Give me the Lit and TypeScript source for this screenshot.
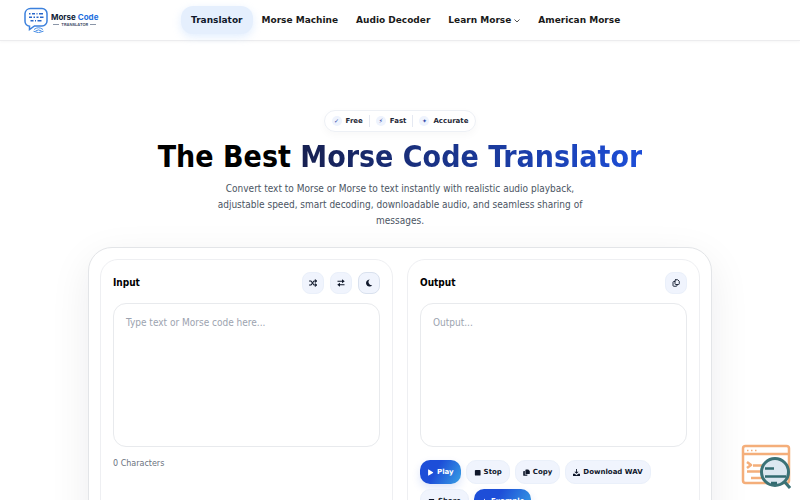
import { LitElement, html, css, svg } from "lit";
import { customElement } from "lit/decorators.js";

const glyph = (body: unknown, size = 8) => html`<svg width=${size} height=${size} viewBox="0 0 16 16" aria-hidden="true">${body}</svg>`;

const stroke = "fill:none;stroke:currentColor;stroke-linejoin:round;stroke-linecap:round";

const icons = {
  shuffle: glyph(svg`<g style=${stroke} stroke-width="2.200"><path d="M1 4h3l6 8h4M1 12h3l1.700-2.200M8.300 6.200 10 4h4"/><path d="M12.500 1.800 14.800 4l-2.300 2.200M12.500 9.800 14.800 12l-2.300 2.200"/></g>`),
  swap: glyph(svg`<path fill="currentColor" d="M1 3.500h9V.5l5.500 4-5.500 4v-3H1zM15 10.500v2H6v3l-5.500-4 5.500-4v3z"/>`),
  moon: glyph(svg`<path fill="currentColor" d="M9.500 1a7 7 0 1 0 5 11.500A6.500 6.500 0 0 1 9.500 1z"/>`),
  copyOutline: glyph(svg`<g style=${stroke} stroke-width="1.800"><path d="M7.500 1.500h4l3 3v5a1.500 1.500 0 0 1-1.500 1.500H7.500A1.500 1.500 0 0 1 6 9.500V3a1.500 1.500 0 0 1 1.500-1.500zM5.500 5H3.500A1.500 1.500 0 0 0 2 6.500v6.500a1.500 1.500 0 0 0 1.500 1.500H8.500a1.500 1.500 0 0 0 1.500-1.500v-1.500"/></g>`),
  play: glyph(svg`<path fill="currentColor" d="M2.500 1.500v13q0 1.200 1.200.6l10-6.200q1-.9 0-1.700l-10-6.300q-1.200-.6-1.200.6z"/>`, 7),
  stop: glyph(svg`<rect x="2" y="2" width="13" height="13" rx="2" fill="currentColor"/>`, 7),
  copy: glyph(svg`<path fill="currentColor" d="M7 1h5l3.500 3.500V10a1.500 1.500 0 0 1-1.500 1.500H7A1.500 1.500 0 0 1 5.500 10V2.500A1.500 1.500 0 0 1 7 1zM2 4.500h2.200V12.800H10V14a1.500 1.500 0 0 1-1.500 1.500H2A1.500 1.500 0 0 1 .5 14V6A1.500 1.500 0 0 1 2 4.500z"/>`, 7),
  download: glyph(svg`<path fill="currentColor" d="M7 0h2v6h4L8 11 3 6h4zM0 11h4l4 3 4-3h4v5H0z"/>`, 7),
  share: glyph(svg`<path fill="currentColor" d="M2 2h12v3H2zM2 7h12v7H2z"/>`, 7),
  example: glyph(svg`<path fill="currentColor" d="M8 1l2 5 5 2-5 2-2 5-2-5-5-2 5-2z"/>`, 7),
  chevron: html`<svg width="6" height="5" viewBox="0 0 12 10" aria-hidden="true"><path d="M1 3l5 5 5-5" fill="none" stroke="currentColor" stroke-width="1.500"/></svg>`,
};

@customElement("morse-logo")
class MorseLogo extends LitElement {
  static styles = css`
    :host { display: block; }
    .logo { display: flex; align-items: center; gap: 2px; color: #0d1b36; text-decoration: none; }
    .mark { display: block; }
    .name { display: block; font: 700 8px/9px Inter, sans-serif; white-space: nowrap; }
    .code { color: #1f6fe0; }
    .tag { display: flex; align-items: center; justify-content: center; gap: 2px; font: 600 4px/5px Inter, sans-serif; color: #33415c; }
    .rule { width: 6px; height: 1px; background: #8b96a8; }
  `;
  render() {
    return html`<a class="logo" href="#" aria-label="Morse Code Translator">
      <svg class="mark" width="25" height="26" viewBox="0 0 25 26" fill="none">
        <path d="M6.500 1.500h11.500a5 5 0 0 1 5 5v7.500a5 5 0 0 1-5 5H10.500L5.500 22.500V19.200A5 5 0 0 1 1 14V6.500A5.500 5.500 0 0 1 6.500 1.500z" stroke="#3b80dd" stroke-width="1.500"/>
        <path d="M5 6.800h1.500M8 6.800h3M12.500 6.800h1M15 6.800h4M5 10.300h3M9.500 10.300h1.500M12.500 10.300h2M16 10.300h3.500M6.500 13.800h3M11 13.800h1M13.500 13.800h4" stroke="#2766c9" stroke-width="1.400"/>
        <path d="M10 22.500q4.500-3.500 9 0M11.500 24q3-2.200 6 0M9.500 24.200q5 3 10 0" stroke="#4c90e6"/>
      </svg>
      <span><span class="name">Morse <span class="code">Code</span></span>
      <span class="tag"><i class="rule"></i>TRANSLATOR<i class="rule"></i></span></span>
    </a>`;
  }
}

@customElement("app-root")
class AppRoot extends LitElement {
  static styles = css`
    :host { display: block; height: 100vh; overflow: hidden; position: relative; background: #fff; color: #111827; font: 10px/16px "DejaVu Sans Condensed", "DejaVu Sans", sans-serif; }
    * { box-sizing: border-box; }
    button { font: 700 7px/10px "DejaVu Sans", sans-serif; color: #0f172a; border: 1px solid #eaf0fa; background: #f0f4fd; cursor: pointer; }
    header { display: flex; align-items: center; height: 41px; padding: 0 24px; border-bottom: 1px solid #ececee; box-shadow: 0 1px 3px #0000000a; }
    .brand { flex: 0 0 157px; }
    nav { display: flex; font-family: "DejaVu Sans", sans-serif; }
    .link { display: flex; align-items: center; gap: 3px; height: 28px; padding: 0 9px; border-radius: 12px; font-size: 9px; font-weight: 700; color: #1a1a1a; text-decoration: none; white-space: nowrap; }
    .current { background: #e5effd; box-shadow: 0 3px 8px #dbeafecc; padding: 0 10px; color: #0f172a; }
    .hero { display: flex; flex-direction: column; align-items: center; padding: 69px 24px 18px; text-align: center; }
    .badges { display: flex; margin: 0; padding: 0 7px; list-style: none; height: 22px; align-items: center; border: 1px solid #edf0f5; border-radius: 11px; box-shadow: 0 3px 8px #0f172a08; font: 700 7px/12px "DejaVu Sans", sans-serif; color: #1f2937; }
    .badge { display: flex; align-items: center; gap: 4px; }
    .badge + .badge { border-left: 1px solid #e5e9f2; margin-left: 6px; padding-left: 6px; }
    .dot { display: grid; place-items: center; width: 10px; height: 10px; border-radius: 5px; background: #eef3fd; color: #3148a8; font-size: 6px; line-height: 10px; }
    h1 { margin: 8px 0 7px; font-size: 30px; line-height: 34px; color: #000; }
    .accent { background: linear-gradient(90deg, #172050, #1d4ed8); background-clip: text; -webkit-background-clip: text; color: transparent; }
    .lead { margin: 0; max-width: 384px; color: #4b5563; }
    main { width: 78%; margin: 0 auto; display: grid; grid-template-columns: 1fr 1fr; gap: 14px; padding: 11px; border: 1px solid #e3e5e8; border-radius: 24px; background: #fff; box-shadow: 0 12px 40px #0f172a14; }
    .panel { padding: 12px; height: 320px; border: 1px solid #eeeff2; border-radius: 18px; background: #fff; }
    .top { display: flex; align-items: center; gap: 6px; height: 22px; margin-bottom: 9px; }
    h2 { flex: 1; margin: 0; color: #000; font-size: 10px; line-height: 16px; }
    .tool { width: 22px; height: 22px; padding: 0; border-radius: 8px; display: grid; place-items: center; }
    .outlined { border-color: #d9e1ee; }
    textarea { display: block; width: 100%; height: 144px; padding: 11px 12px; border: 1px solid #e8eaed; border-radius: 13px; resize: none; background: #fff; color: #111827; font: inherit; outline: none; }
    textarea::placeholder { color: #9ca3af; opacity: 1; }
    .count { margin: 10px 0 0; color: #6b7280; font: 8px/14px "DejaVu Sans", sans-serif; }
    .actions { display: flex; flex-wrap: wrap; gap: 5px; margin-top: 13px; }
    .action { display: flex; align-items: center; gap: 3px; height: 24px; padding: 0 7px; border-radius: 10px; }
    .primary { padding: 0 6px; border-color: transparent; color: #fff; background: linear-gradient(120deg, #1d4ed8 40%, #38a0e4) border-box; box-shadow: 0 4px 8px #1d4ed826; }
    .inspect { position: absolute; right: 9px; bottom: 11px; width: 50px; height: 46px; padding: 0; border: 0; background: none; }
  `;

  render() {
    return html`
      <header>
        <morse-logo class="brand"></morse-logo>
        <nav>
          <a class="link current" href="#">Translator</a>
          <a class="link" href="#">Morse Machine</a>
          <a class="link" href="#">Audio Decoder</a>
          <a class="link" href="#">Learn Morse ${icons.chevron}</a>
          <a class="link" href="#">American Morse</a>
        </nav>
      </header>
      <section class="hero">
        <ul class="badges">
          ${[["✓", "Free"], ["⚡", "Fast"], ["✦", "Accurate"]].map(([mark, label]) => html`<li class="badge"><span class="dot" aria-hidden="true">${mark}</span>${label}</li>`)}
        </ul>
        <h1>The Best <span class="accent">Morse Code Translator</span></h1>
        <p class="lead">Convert text to Morse or Morse to text instantly with realistic audio playback, adjustable speed, smart decoding, downloadable audio, and seamless sharing of messages.</p>
      </section>
      <main>
        <section class="panel">
          <div class="top">
            <h2><label for="input">Input</label></h2>
            <button class="tool" aria-label="Random">${icons.shuffle}</button>
            <button class="tool" aria-label="Swap">${icons.swap}</button>
            <button class="tool outlined" aria-label="Dark mode">${icons.moon}</button>
          </div>
          <textarea id="input" placeholder="Type text or Morse code here..."></textarea>
          <p class="count">0 Characters</p>
        </section>
        <section class="panel">
          <div class="top">
            <h2><label for="output">Output</label></h2>
            <button class="tool" aria-label="Copy output">${icons.copyOutline}</button>
          </div>
          <textarea id="output" placeholder="Output..." readonly></textarea>
          <div class="actions">
            <button class="action primary">${icons.play}Play</button>
            <button class="action">${icons.stop}Stop</button>
            <button class="action">${icons.copy}Copy</button>
            <button class="action">${icons.download}Download WAV</button>
            <button class="action">${icons.share}Share</button>
            <button class="action primary">${icons.example}Example</button>
          </div>
        </section>
      </main>
      <button class="inspect" aria-label="Inspect code">
        <svg width="50" height="46" viewBox="0 0 50 46" fill="none">
          <g stroke="#f4ae7a" stroke-width="2.500" stroke-linejoin="round">
            <rect x="2" y="3" width="46" height="37" rx="2.500"/>
            <path d="M2 11h46M6 19l4 3-4 3M12 22.500h9M6 28.500h14M10 35h13"/>
            <path d="M6 7.500h1.500M10 7.500h1.500M14 7.500h1.500" stroke-width="1.500"/>
          </g>
          <path d="m42 37 7 8" stroke="#3b7276" stroke-width="3"/>
          <circle cx="34" cy="29" r="13.500" fill="#dce7f0" stroke="#3b7276" stroke-width="3"/>
          <path d="M24 25.500h9M24 33.500h21M30 40h6" stroke="#326b70" stroke-width="2.500"/>
        </svg>
      </button>
    `;
  }
}
